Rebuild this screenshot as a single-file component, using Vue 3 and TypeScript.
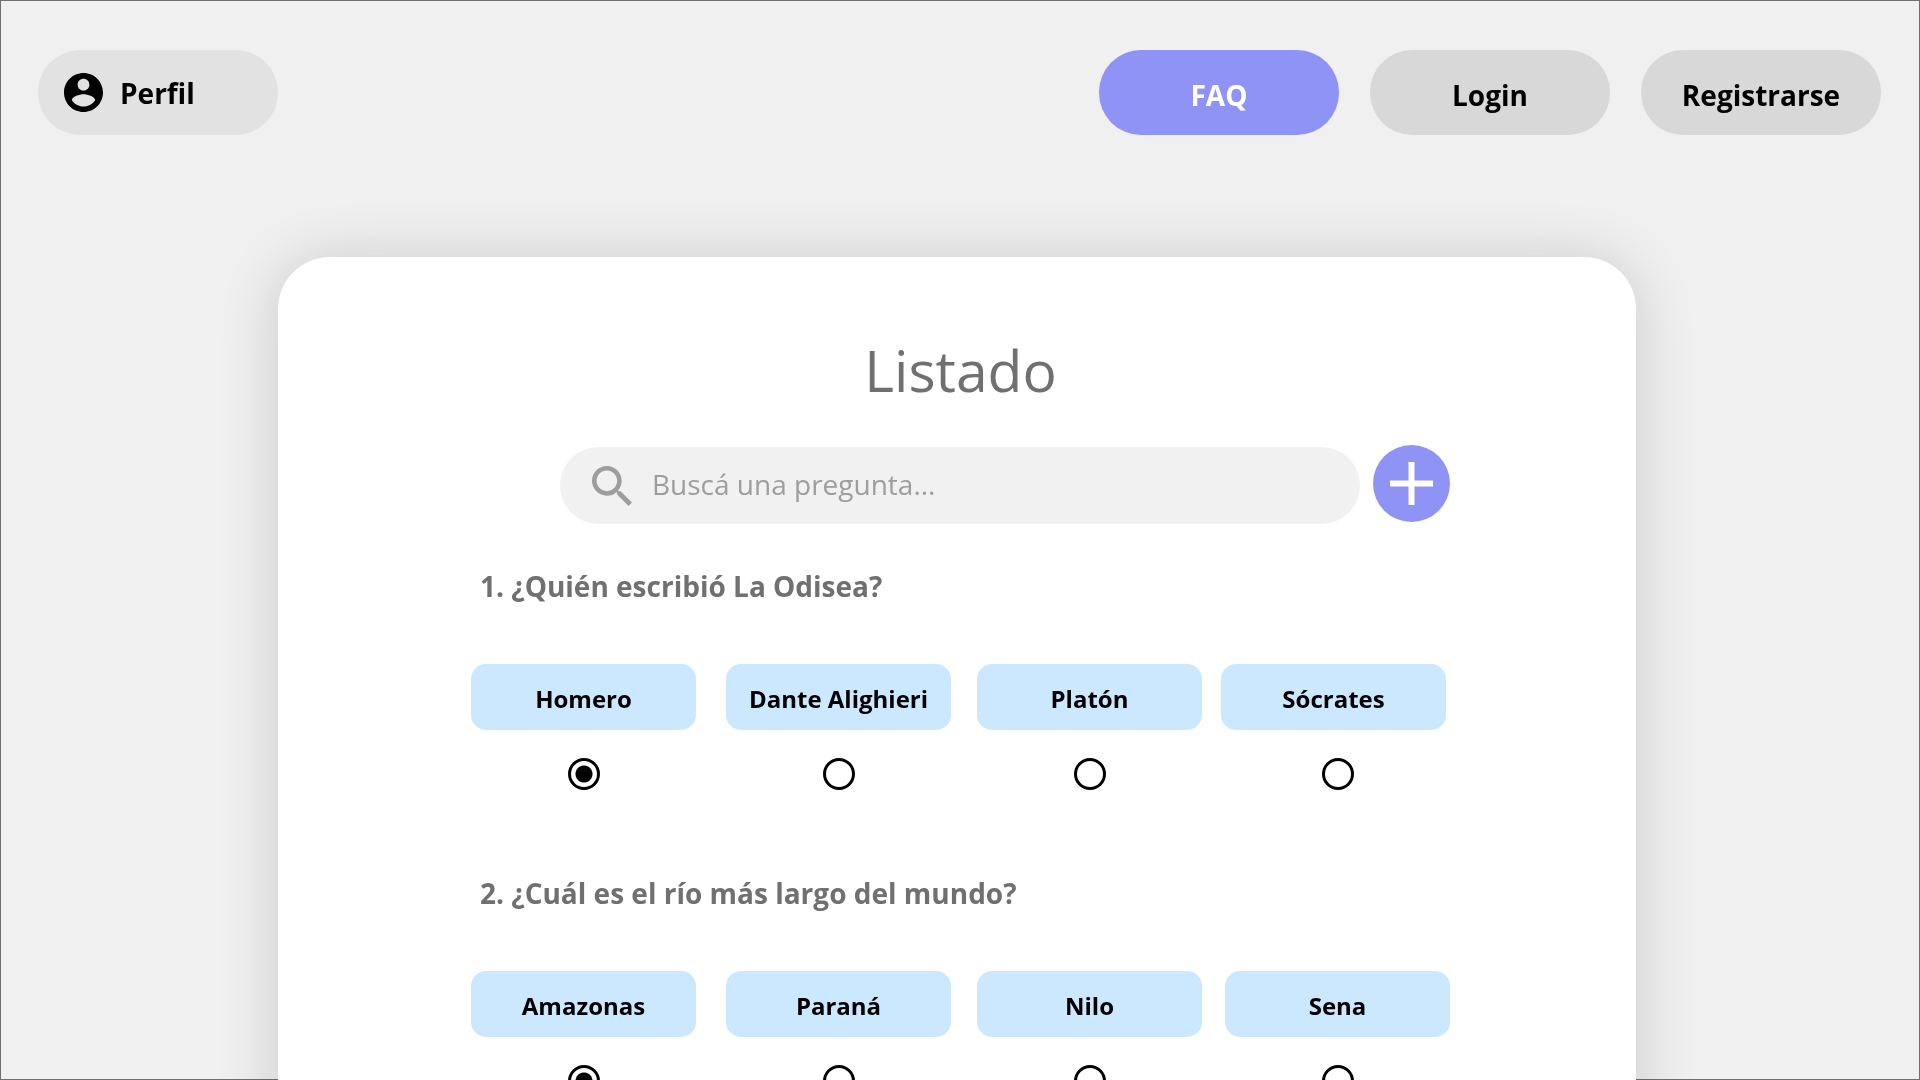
<script setup lang="ts">
import { ref } from 'vue'

interface Question {
  id: number
  text: string
  options: string[]
  answer: number
  narrow: boolean
}

const search = ref('')

const questions = ref<Question[]>([
  {
    id: 1,
    text: '¿Quién escribió La Odisea?',
    options: ['Homero', 'Dante Alighieri', 'Platón', 'Sócrates'],
    answer: 0,
    narrow: true,
  },
  {
    id: 2,
    text: '¿Cuál es el río más largo del mundo?',
    options: ['Amazonas', 'Paraná', 'Nilo', 'Sena'],
    answer: 0,
    narrow: false,
  },
])
</script>

<template>
  <div class="page">
    <header class="topbar">
      <button type="button" class="pill pill--profile">
        <svg class="avatar" viewBox="2 2 20 20" aria-hidden="true">
          <path
            d="M12 2C6.48 2 2 6.48 2 12s4.480 10 10 10 10-4.480 10-10S17.520 2 12 2zm0 3c1.660 0 3 1.340 3 3s-1.340 3-3 3-3-1.340-3-3 1.340-3 3-3zm0 14.200c-2.500 0-4.710-1.280-6-3.220.030-1.990 4-3.080 6-3.080 1.990 0 5.970 1.090 6 3.080-1.290 1.940-3.500 3.220-6 3.220z"
          />
        </svg>
        <span>Perfil</span>
      </button>
      <nav class="actions">
        <button type="button" class="pill pill--accent">FAQ</button>
        <button type="button" class="pill">Login</button>
        <button type="button" class="pill">Registrarse</button>
      </nav>
    </header>

    <main class="card">
      <h1 class="title">Listado</h1>

      <div class="toolbar">
        <label class="search">
          <svg class="search-icon" viewBox="3 3 17.500 17.500" aria-hidden="true">
            <path
              d="M15.500 14h-.790l-.280-.270C15.410 12.590 16 11.110 16 9.500 16 5.910 13.090 3 9.500 3S3 5.910 3 9.500 5.910 16 9.500 16c1.610 0 3.090-.590 4.230-1.570l.270.280v.790l5 4.990L20.490 19l-4.990-5zm-6 0C7.010 14 5 11.990 5 9.500S7.010 5 9.500 5 14 7.010 14 9.500 11.990 14 9.500 14z"
            />
          </svg>
          <input
            v-model="search"
            type="text"
            class="search-input"
            placeholder="Buscá una pregunta..."
            aria-label="Buscá una pregunta"
          />
        </label>
        <button type="button" class="add" aria-label="Agregar pregunta">
          <svg viewBox="0 0 43 43" aria-hidden="true">
            <path d="M18.500 0h6v18.500H43v6H24.500V43h-6V24.500H0v-6h18.500z" />
          </svg>
        </button>
      </div>

      <section v-for="q in questions" :key="q.id" class="question">
        <h2 class="question-text">{{ q.id }}. {{ q.text }}</h2>
        <div class="options" :class="{ 'options--narrow': q.narrow }" role="radiogroup" :aria-label="q.text">
          <label v-for="(option, i) in q.options" :key="option" class="option">
            <span class="option-text">{{ option }}</span>
            <input v-model="q.answer" type="radio" class="radio" :name="`question-${q.id}`" :value="i" />
          </label>
        </div>
      </section>
    </main>
  </div>
</template>

<style>
body {
  background: #f0f0f0;
}
</style>

<style scoped>
.page {
  box-sizing: border-box;
  height: 100vh;
  overflow-x: hidden;
  overflow-y: auto;
  scrollbar-width: none;
  background: #f0f0f0;
  font-family: 'Segoe UI', 'Open Sans', 'Noto Sans', sans-serif;
  color: #000;
}

/* Thin frame round the window; the card slides over its lower edge. */
.page::before {
  content: '';
  position: fixed;
  inset: 0;
  border: 1px solid #707070;
  pointer-events: none;
}

.topbar {
  position: relative;
  display: flex;
  justify-content: space-between;
  padding: 50px 39px 0 38px;
}

.actions {
  display: flex;
  gap: 31px;
}

.pill {
  box-sizing: border-box;
  width: 240px;
  height: 85px;
  padding: 4px 0 0;
  border: 0;
  border-radius: 42px;
  background: #d8d8d8;
  color: #000;
  font: inherit;
  font-size: 28px;
  font-weight: 700;
  line-height: 40px;
  cursor: pointer;
}

.pill--accent {
  background: #9093f6;
  color: #fff;
}

.pill--profile {
  display: flex;
  align-items: center;
  gap: 17px;
  padding: 0 26px;
  background: #e2e2e2;
}

.avatar {
  width: 39px;
  height: 39px;
}

.card {
  position: relative;
  box-sizing: border-box;
  margin: 122px 284px 0 278px;
  padding: 73px 186px 80px 193px;
  border-radius: 52px 52px 0 0;
  background: #fff;
  box-shadow: 0 3px 60px rgba(0, 0, 0, 0.16);
}

.title {
  margin: 0;
  color: #707070;
  font-size: 57px;
  font-weight: 400;
  line-height: 80px;
  text-align: center;
}

.toolbar {
  display: flex;
  gap: 13px;
  margin: 35px 0 0 89px;
}

.search {
  box-sizing: border-box;
  display: flex;
  flex: 1;
  align-items: center;
  gap: 20px;
  height: 77px;
  margin-top: 2px;
  padding: 0 32px;
  border-radius: 39px;
  background: #f1f1f1;
}

.search-icon {
  flex: none;
  width: 40px;
  height: 40px;
  fill: #9d9d9d;
}

.search-input {
  flex: 1;
  min-width: 0;
  padding: 0 0 3px;
  border: 0;
  outline: 0;
  background: transparent;
  color: #707070;
  font: inherit;
  font-size: 28px;
  line-height: 40px;
}

.search-input::placeholder {
  color: #9d9d9d;
  opacity: 1;
}

.add {
  display: flex;
  flex: none;
  align-items: center;
  justify-content: center;
  width: 77px;
  height: 77px;
  padding: 0;
  border: 0;
  border-radius: 50%;
  background: #9093f6;
  cursor: pointer;
}

.add svg {
  width: 43px;
  height: 43px;
  fill: #fff;
}

.question {
  height: 307px;
}

.toolbar + .question {
  margin-top: 42px;
}

.question-text {
  margin: 0 0 0 9px;
  color: #707070;
  font-size: 28px;
  font-weight: 700;
  line-height: 40px;
}

.options {
  display: grid;
  grid-template-columns: 225fr 30fr 225fr 26fr 225fr 23fr 225fr;
  margin-top: 58px;
}

/* The last column starts closer and ends past the row, so its radio stays in line. */
.options--narrow {
  grid-template-columns: 225fr 30fr 225fr 26fr 225fr 19fr 233fr;
  margin-right: -4px;
}

.option {
  display: flex;
  flex-direction: column;
  align-items: center;
  cursor: pointer;
}

.option:nth-child(2) {
  grid-column: 3;
}

.option:nth-child(3) {
  grid-column: 5;
}

.option:nth-child(4) {
  grid-column: 7;
}

.option-text {
  box-sizing: border-box;
  align-self: flex-start;
  width: 100%;
  max-width: 225px;
  padding: 17px 0 13px;
  border-radius: 15px;
  background: #cce8ff;
  font-size: 24px;
  font-weight: 700;
  line-height: 36px;
  text-align: center;
}

.radio {
  appearance: none;
  box-sizing: border-box;
  width: 32px;
  height: 32px;
  margin: 28px 0 0;
  border: 3px solid #000;
  border-radius: 50%;
  background: #fff;
}

.radio:checked {
  background: radial-gradient(circle, #000 8px, #fff 9px);
}
</style>
